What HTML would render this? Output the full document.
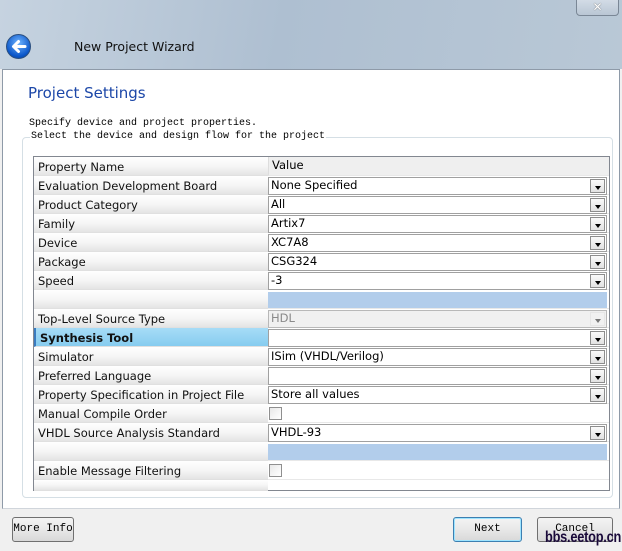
<!DOCTYPE html>
<html><head><meta charset="utf-8"><style>
*{margin:0;padding:0;box-sizing:border-box}
body{width:622px;height:551px;overflow:hidden;position:relative;background:#f0f0f0;font-family:"DejaVu Sans","Liberation Sans",sans-serif;}
.top{position:absolute;left:0;top:0;width:622px;height:69px;background:linear-gradient(100deg,#c6d3e0 0%,#aebfd1 45%,#b9c8d6 100%)}
.close{position:absolute;left:576px;top:-2px;width:43px;height:18px;border:1px solid #7a8796;border-radius:0 0 4px 4px;background:linear-gradient(#d4dde7,#b9c6d4);text-align:center;font-size:12px;font-weight:bold;color:#fff;line-height:16px;text-shadow:0 0 1px #333}
.back{position:absolute;left:6px;top:34px;width:25px;height:25px;border-radius:50%;background:radial-gradient(circle at 50% 35%,#6fb4ff,#0a55c8 70%,#063c8f);border:1px solid #2a4f80}
.wt{position:absolute;left:74px;top:39px;font-size:12.5px;color:#111}
.panel{position:absolute;left:2px;top:69px;width:618px;height:440px;background:#fff;border:1px solid #8e9aa8;border-bottom:1px solid #d0d5db}
.h1{position:absolute;left:28px;top:84px;font-size:15px;color:#1c47a8}
.mono{position:absolute;font-family:"Liberation Mono",monospace;font-size:10px;color:#000}
.grp{position:absolute;left:22px;top:137px;width:591px;height:361px;border:1px solid #d5dfe5;border-radius:4px}
.grpbg{position:absolute;left:30px;top:131px;background:#fff;padding:0 1px}
.tbl{position:absolute;left:33px;top:156px;width:577px;height:335px;border:1px solid #828790;background:#fff}
.row{position:absolute;left:0;width:575px;height:19px}
.lab{position:absolute;left:0;top:0;width:234px;height:19px;background:linear-gradient(#fff 0%,#f6f6f6 50%,#e4e4e4 100%);border-bottom:1px solid #e0e0e0;font-size:11.5px;padding-left:4px;line-height:20px;color:#111;white-space:nowrap;overflow:hidden}
.val{position:absolute;left:234px;top:0;width:341px;height:19px;border-bottom:1px solid #e8e8e8}
.box{position:absolute;left:0;top:1px;width:339px;height:18px;border:1px solid #a0a0a0;background:#fff;font-size:11.5px;padding-left:2px;line-height:15px;color:#000}
.dd{position:absolute;right:1px;top:1px;width:15px;height:14px;border:1px solid #8d8d8d;background:linear-gradient(#fafafa,#e2e2e2)}
.dd:after{content:"";position:absolute;left:4px;top:6px;border-left:3px solid transparent;border-right:3px solid transparent;border-top:4px solid #000}
.blue{position:absolute;left:0;top:2px;width:339px;height:16px;background:#b2cdeb}
.chk{position:absolute;left:1px;top:3px;width:13px;height:13px;border:1px solid #8f8f8f;background:linear-gradient(135deg,#e8e8e8,#fff)}
.btn{position:absolute;top:517px;height:25px;border:1px solid #707070;border-radius:3px;background:linear-gradient(#f4f4f4 0%,#e8e8e8 50%,#d8d8d8 100%);font-family:"Liberation Mono",monospace;font-size:11px;text-align:center;line-height:23px;color:#000}
.wm{position:absolute;left:545px;top:529px;font-family:"Liberation Sans",sans-serif;font-weight:bold;font-size:16px;color:#1a0a3a;letter-spacing:-0.3px;transform:scaleX(.8);transform-origin:left}
</style></head><body>
<div class="top"></div>
<div class="close">✕</div>
<div class="back"><svg width="25" height="25" viewBox="0 0 25 25" style="position:absolute;left:-1px;top:-1px"><path d="M19 12.5H8M12.5 7.5L7.5 12.5L12.5 17.5" stroke="#fff" stroke-width="3" fill="none" stroke-linecap="round" stroke-linejoin="round"/></svg></div>
<div class="wt">New Project Wizard</div>
<div class="panel"></div>
<div class="h1">Project Settings</div>
<div class="mono" style="left:29px;top:118px">Specify device and project properties.</div>
<div class="grp"></div>
<div class="mono grpbg">Select the device and design flow for the project</div>
<div class="tbl">
<div class="row" style="top:0"><div class="lab">Property Name</div><div class="val" style="background:#efefef;font-size:11.5px;padding-left:3px;line-height:17px;border-left:1px solid #ddd">Value</div></div>
<div class="row" style="top:19px"><div class="lab">Evaluation Development Board</div><div class="val"><div class="box">None Specified<div class="dd"></div></div></div></div>
<div class="row" style="top:38px"><div class="lab">Product Category</div><div class="val"><div class="box">All<div class="dd"></div></div></div></div>
<div class="row" style="top:57px"><div class="lab">Family</div><div class="val"><div class="box">Artix7<div class="dd"></div></div></div></div>
<div class="row" style="top:76px"><div class="lab">Device</div><div class="val"><div class="box">XC7A8<div class="dd"></div></div></div></div>
<div class="row" style="top:95px"><div class="lab">Package</div><div class="val"><div class="box">CSG324<div class="dd"></div></div></div></div>
<div class="row" style="top:114px"><div class="lab">Speed</div><div class="val"><div class="box">-3<div class="dd"></div></div></div></div>
<div class="row" style="top:133px"><div class="lab"></div><div class="val"><div class="blue"></div></div></div>
<div class="row" style="top:152px"><div class="lab">Top-Level Source Type</div><div class="val"><div class="box" style="background:#f0f0f0;color:#8a8a8a;border-color:#b8b8b8">HDL<div class="dd" style="border-color:#ddd;background:#f2f2f2;opacity:.5"></div></div></div></div>
<div class="row" style="top:171px"><div class="lab" style="background:linear-gradient(#a7dcf7,#86ccef);font-weight:bold;border-left:2px solid #3a7bbf">Synthesis Tool</div><div class="val"><div class="box"><div class="dd"></div></div></div></div>
<div class="row" style="top:190px"><div class="lab">Simulator</div><div class="val"><div class="box">ISim (VHDL/Verilog)<div class="dd"></div></div></div></div>
<div class="row" style="top:209px"><div class="lab">Preferred Language</div><div class="val"><div class="box"><div class="dd"></div></div></div></div>
<div class="row" style="top:228px"><div class="lab">Property Specification in Project File</div><div class="val"><div class="box">Store all values<div class="dd"></div></div></div></div>
<div class="row" style="top:247px"><div class="lab">Manual Compile Order</div><div class="val"><div class="chk"></div></div></div>
<div class="row" style="top:266px"><div class="lab">VHDL Source Analysis Standard</div><div class="val"><div class="box">VHDL-93<div class="dd"></div></div></div></div>
<div class="row" style="top:285px"><div class="lab"></div><div class="val"><div class="blue"></div></div></div>
<div class="row" style="top:304px"><div class="lab">Enable Message Filtering</div><div class="val"><div class="chk"></div></div></div>
<div class="row" style="top:323px;height:11px"><div class="lab" style="height:11px"></div></div>
</div>
<div class="btn" style="left:12px;width:62px">More Info</div>
<div class="btn" style="left:453px;width:69px;border-color:#3c7fb1;box-shadow:inset 0 0 0 1px #9ee4ff">Next</div>
<div class="btn" style="left:537px;width:76px">Cancel</div>
<div class="wm">bbs.eetop.cn</div>
</body></html>
